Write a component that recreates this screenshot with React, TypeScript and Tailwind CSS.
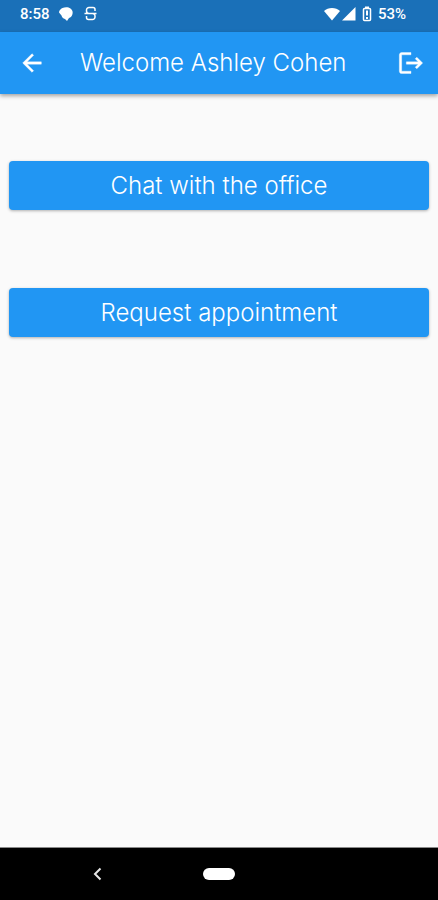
import type { ReactNode } from 'react';

const actions = ['Chat with the office', 'Request appointment'];

function StatusBar() {
  return (
    <div className="flex h-8 items-center justify-between bg-[#1a70b8] pr-8 pl-5 pb-1 font-['Roboto',sans-serif] text-[15px] font-medium text-white">
      <div className="flex items-center">
        <span>8:58</span>
        <svg className="ml-2 h-4 w-4" viewBox="0 0 16 16" fill="currentColor" aria-hidden="true">
          <path d="M4.500 2C7 1 10.500 1 12.500 2.500c2 1.500 2.500 3 2 5.500S12.500 11.500 11 12L9 15 7 13C5 12.500 4 11.500 3.500 9.500L1 6.500C1 4.500 2.500 3 4.500 2z" />
        </svg>
        <svg className="ml-2 h-4 w-4" viewBox="0 0 16 16" fill="none" stroke="currentColor" strokeWidth="1.500" aria-hidden="true">
          <path d="M13 5V3.500a2 2 0 0 0-2-2H7a2.500 2.500 0 0 0-2.500 2.500v1a2.500 2.500 0 0 0 2.500 2.500h3.500a2.500 2.500 0 0 1 2.500 2.500v1a2.500 2.500 0 0 1-2.500 2.500H6.500a2 2 0 0 1-2-2V10M2.500 7.500H14.500" />
        </svg>
      </div>
      <div className="flex items-center">
        <svg className="h-4 w-4" viewBox="0 0 16 16" fill="currentColor" aria-hidden="true">
          <path d="M8 14.500 0 5C2 3 5 2 8 2s6 1 8 3z" />
        </svg>
        <svg className="ml-0.5 h-4 w-4" viewBox="0 0 16 16" fill="currentColor" aria-hidden="true">
          <path d="M13.500 1v13.500H0z" />
        </svg>
        <svg className="ml-0.5 h-4 w-4" viewBox="0 0 16 16" fill="none" stroke="currentColor" aria-hidden="true">
          <rect x="3.500" y="2.500" width="7" height="12" rx="1" strokeWidth="1.500" />
          <path d="M5 1.500h4" strokeWidth="2" />
          <path d="M7 4.500v5M7 11v2" strokeWidth="2" />
        </svg>
        <span className="ml-0.5">53%</span>
      </div>
    </div>
  );
}

function IconButton({ label, children }: { label: string; children: ReactNode }) {
  return (
    <button type="button" aria-label={label} className="shrink-0">
      <svg className="h-7 w-7" viewBox="0 0 24 24" fill="currentColor" stroke="currentColor" strokeWidth="0.300" aria-hidden="true">
        {children}
      </svg>
    </button>
  );
}

export default function App() {
  return (
    <div className="flex min-h-screen flex-col bg-[#fafafa] font-['Inter',sans-serif] text-white">
      <StatusBar />

      <header className="flex items-center bg-[#2196f3] py-[15px] pr-[13px] pl-[18px] shadow-[0_2px_4px_rgba(0,0,0,0.35)]">
        <IconButton label="Back">
          <path d="M20 11H7.830l5.590-5.590L12 4l-8 8 8 8 1.410-1.410L7.830 13H20z" />
        </IconButton>
        <h1 className="ml-[34px] flex-1 text-2xl leading-8 font-light whitespace-nowrap">Welcome Ashley Cohen</h1>
        <IconButton label="Log out">
          <path d="M17 7l-1.410 1.410L18.170 11H8v2h10.170l-2.580 2.580L17 17l5-5zM4 5h8V3H4c-1.100 0-2 .9-2 2v14c0 1.100.9 2 2 2h8v-2H4z" />
        </IconButton>
      </header>

      <main className="flex flex-1 flex-col gap-[78px] px-[9px] pt-[67px]">
        {actions.map((action) => (
          <button
            key={action}
            type="button"
            className="w-full rounded bg-[#2196f3] pt-[9px] pb-2 text-2xl leading-8 font-light shadow-[0_1px_3px_rgba(0,0,0,0.3)]"
          >
            {action}
          </button>
        ))}
      </main>

      <nav className="grid h-[53px] grid-cols-[1fr_auto_1fr] items-center border-t border-[#8a8a8a] bg-black">
        <button type="button" aria-label="System back" className="justify-self-center pr-2">
          <svg className="h-4 w-4" viewBox="0 0 16 16" fill="none" stroke="#e5e5e5" strokeWidth="2" aria-hidden="true">
            <path d="M10.500 2.500 5 8l5.500 5.500" />
          </svg>
        </button>
        <button type="button" aria-label="Home" className="h-3 w-8 rounded-full bg-white" />
      </nav>
    </div>
  );
}
